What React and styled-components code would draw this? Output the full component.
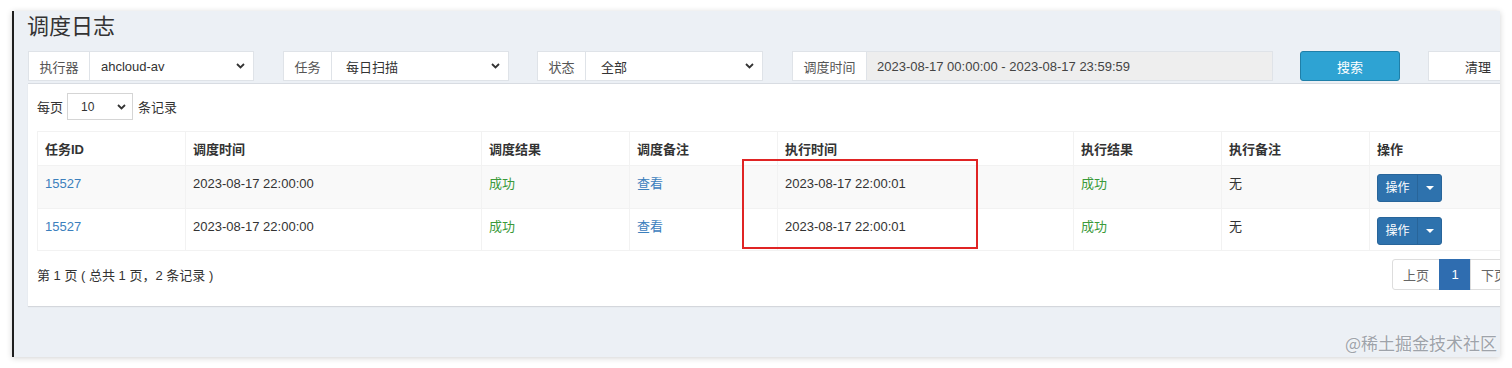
import React from 'react';
import styled, { createGlobalStyle } from 'styled-components';

const GlobalStyle = createGlobalStyle`
  html, body {
    margin: 0;
    padding: 0;
    background: #ffffff;
  }
  body {
    font-family: "Liberation Sans", Arial, "Noto Sans CJK SC", sans-serif;
    font-size: 13px;
    color: #333;
  }
`;

const Page = styled.div`
  width: 1512px;
  height: 368px;
  padding: 11px 0 0 12px;
  box-sizing: border-box;
  overflow: hidden;
`;

const Frame = styled.div`
  position: relative;
  width: 1488px;
  height: 346px;
  box-sizing: border-box;
  border-left: 2px solid #1e1e1e;
  background: #ecf0f5;
  box-shadow: 0 1px 6px rgba(0, 0, 0, 0.18);
  overflow: hidden;
  padding-left: 14px;
`;

const Content = styled.div`
  width: 1499px;
  display: flex;
  flex-direction: column;
`;

const Title = styled.h1`
  margin: 1px 0 0 -1px;
  font-size: 22px;
  line-height: 30px;
  font-weight: normal;
  color: #333;
`;

const FilterRow = styled.div`
  display: flex;
  align-items: stretch;
  height: 30px;
  margin-top: 9px;
`;

const Group = styled.div`
  display: flex;
  width: ${p => p.w}px;
  margin-right: ${p => p.gap}px;
  flex-shrink: 0;
  border: 1px solid #dfe3e8;
  box-sizing: border-box;
  background: #fff;
`;

const Label = styled.div`
  width: ${p => p.w}px;
  flex-shrink: 0;
  display: flex;
  align-items: center;
  justify-content: center;
  color: #555;
  border-right: 1px solid #dfe3e8;
  background: #fff;
`;

const SelectBox = styled.div`
  flex: 1;
  display: flex;
  align-items: center;
  justify-content: space-between;
  padding: 0 8px 0 ${p => p.pl || 13}px;
  color: #333;
  background: #fff;
`;

const DateBox = styled.div`
  flex: 1;
  display: flex;
  align-items: center;
  padding-left: 10px;
  background: #eeeeee;
  color: #444;
`;

const SearchButton = styled.div`
  width: 100px;
  flex-shrink: 0;
  margin-right: 28px;
  box-sizing: border-box;
  border: 1px solid #1f7fa8;
  border-radius: 3px;
  background: #2ea3d3;
  color: #fff;
  display: flex;
  align-items: center;
  justify-content: center;
`;

const ClearButton = styled.div`
  width: 100px;
  flex-shrink: 0;
  box-sizing: border-box;
  border: 1px solid #dfe3e8;
  background: #fff;
  color: #333;
  display: flex;
  align-items: center;
  justify-content: center;
`;

const Box = styled.div`
  margin-top: 2px;
  background: #fff;
  border-top: 1px solid #d8dce2;
  box-shadow: 0 1px 1px rgba(0, 0, 0, 0.1);
  padding: 9px 9px 16px 9px;
`;

const LengthRow = styled.div`
  display: flex;
  align-items: center;
  height: 27px;
  color: #333;
`;

const SmallSelect = styled.div`
  width: 66px;
  height: 27px;
  box-sizing: border-box;
  margin: 0 5px 0 4px;
  border: 1px solid #d5d5d5;
  display: flex;
  align-items: center;
  justify-content: space-between;
  padding: 0 6px 0 13px;
  font-size: 12px;
`;

const TableWrap = styled.div`
  position: relative;
  margin-top: 11px;
  width: 1480px;
`;

const Table = styled.table`
  width: 1480px;
  border-collapse: collapse;
  table-layout: fixed;
`;

const Th = styled.th`
  text-align: left;
  font-weight: bold;
  height: 34px;
  box-sizing: border-box;
  padding: 0 7px;
  border: 1px solid #f2f2f2;
  color: #333;
`;

const Tr = styled.tr`
  background: ${p => (p.striped ? '#f9f9f9' : '#fff')};
`;

const Td = styled.td`
  vertical-align: top;
  height: ${p => p.h}px;
  box-sizing: border-box;
  padding: 8px 7px 0 7px;
  line-height: 20px;
  border: 1px solid #f2f2f2;
  color: ${p => p.color || '#333'};
`;

const Link = styled.span`
  color: #3c80bd;
`;

const Ok = styled.span`
  color: #3a9a3a;
`;

const SplitButton = styled.div`
  display: inline-flex;
  height: 28px;
  border-radius: 3px;
  overflow: hidden;
  border: 1px solid #28659a;
  box-sizing: border-box;
  background: #2e72ad;
  color: #fff;
  font-size: 12px;
`;

const SplitMain = styled.div`
  width: 39px;
  display: flex;
  align-items: center;
  justify-content: center;
  border-right: 1px solid #28659a;
`;

const SplitCaret = styled.div`
  width: 23px;
  display: flex;
  align-items: center;
  justify-content: center;
`;

const Highlight = styled.div`
  position: absolute;
  left: 705px;
  top: 28px;
  width: 236px;
  height: 90px;
  box-sizing: border-box;
  border: 2px solid #e02424;
  pointer-events: none;
`;

const Footer = styled.div`
  display: flex;
  justify-content: space-between;
  align-items: center;
  margin-top: 8px;
  width: 1481px;
`;

const Info = styled.div`
  color: #333;
`;

const Pager = styled.div`
  display: flex;
  height: 31px;
`;

const PageItem = styled.div`
  width: ${p => p.w}px;
  box-sizing: border-box;
  display: flex;
  align-items: center;
  justify-content: center;
  border: 1px solid ${p => (p.active ? '#2f6db0' : '#dddddd')};
  margin-left: -1px;
  background: ${p => (p.active ? '#2f6db0' : '#fff')};
  color: ${p => (p.active ? '#fff' : '#666')};
  border-radius: ${p => p.radius || '0'};
`;

const Watermark = styled.div`
  position: absolute;
  right: 3px;
  bottom: 3px;
  font-size: 17px;
  line-height: 22px;
  color: #9ea3aa;
  font-family: "Noto Sans CJK SC", sans-serif;
  text-shadow: 0 0 2px #fff;
`;

const Chevron = () => (
  <svg width="9" height="6" viewBox="0 0 9 6">
    <path d="M1 1l3.5 3.5L8 1" fill="none" stroke="#333" strokeWidth="1.8" />
  </svg>
);

const Caret = () => (
  <svg width="8" height="4" viewBox="0 0 8 4">
    <path d="M0 0h8L4 4z" fill="#fff" />
  </svg>
);

const columns = [
  { title: '任务ID', w: 148 },
  { title: '调度时间', w: 296 },
  { title: '调度结果', w: 148 },
  { title: '调度备注', w: 148 },
  { title: '执行时间', w: 296 },
  { title: '执行结果', w: 148 },
  { title: '执行备注', w: 148 },
  { title: '操作', w: 148 },
];

const rows = [
  { id: '15527', trigger: '2023-08-17 22:00:00', handle: '2023-08-17 22:00:01', h: 43 },
  { id: '15527', trigger: '2023-08-17 22:00:00', handle: '2023-08-17 22:00:01', h: 42 },
];

export default function App() {
  return (
    <>
      <GlobalStyle />
      <Page>
        <Frame>
          <Content>
            <Title>调度日志</Title>
            <FilterRow>
              <Group w={226} gap={29}>
                <Label w={60}>执行器</Label>
                <SelectBox pl={11}>ahcloud-av<Chevron /></SelectBox>
              </Group>
              <Group w={226} gap={28}>
                <Label w={47}>任务</Label>
                <SelectBox pl={14}>每日扫描<Chevron /></SelectBox>
              </Group>
              <Group w={226} gap={29}>
                <Label w={47}>状态</Label>
                <SelectBox pl={15}>全部<Chevron /></SelectBox>
              </Group>
              <Group w={481} gap={27}>
                <Label w={73}>调度时间</Label>
                <DateBox>2023-08-17 00:00:00 - 2023-08-17 23:59:59</DateBox>
              </Group>
              <SearchButton>搜索</SearchButton>
              <ClearButton>清理</ClearButton>
            </FilterRow>
            <Box>
              <LengthRow>
                每页
                <SmallSelect>10<Chevron /></SmallSelect>
                条记录
              </LengthRow>
              <TableWrap>
                <Table>
                  <colgroup>
                    {columns.map((c, i) => <col key={i} style={{ width: c.w }} />)}
                  </colgroup>
                  <thead>
                    <tr>
                      {columns.map((c, i) => <Th key={i}>{c.title}</Th>)}
                    </tr>
                  </thead>
                  <tbody>
                    {rows.map((r, i) => (
                      <Tr key={i} striped={i % 2 === 0}>
                        <Td h={r.h}><Link>{r.id}</Link></Td>
                        <Td h={r.h}>{r.trigger}</Td>
                        <Td h={r.h}><Ok>成功</Ok></Td>
                        <Td h={r.h}><Link>查看</Link></Td>
                        <Td h={r.h}>{r.handle}</Td>
                        <Td h={r.h}><Ok>成功</Ok></Td>
                        <Td h={r.h}>无</Td>
                        <Td h={r.h}>
                          <SplitButton>
                            <SplitMain>操作</SplitMain>
                            <SplitCaret><Caret /></SplitCaret>
                          </SplitButton>
                        </Td>
                      </Tr>
                    ))}
                  </tbody>
                </Table>
                <Highlight />
              </TableWrap>
              <Footer>
                <Info>第 1 页 ( 总共 1 页，2 条记录 )</Info>
                <Pager>
                  <PageItem w={48} radius="3px 0 0 3px">上页</PageItem>
                  <PageItem w={32} active>1</PageItem>
                  <PageItem w={48} radius="0 3px 3px 0">下页</PageItem>
                </Pager>
              </Footer>
            </Box>
          </Content>
          <Watermark>@稀土掘金技术社区</Watermark>
        </Frame>
      </Page>
    </>
  );
}
